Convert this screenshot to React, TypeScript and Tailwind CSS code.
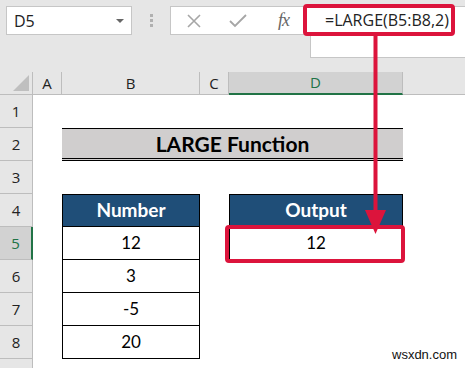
export default function App() {
  const rows = [1, 2, 3, 4, 5, 6, 7, 8, 9]
  const numbers = ['12', '3', '-5', '20']

  return (
    <div className="relative w-[465px] h-[368px] overflow-hidden bg-white font-['Open_Sans',sans-serif]">
      {/* Formula bar */}
      <div className="h-[72px] bg-[#e6e6e6] flex items-start pt-[6px] pl-[6px]">
        <div className="w-[126px] h-[29px] bg-white border border-[#c6c6c6] flex items-center justify-between pl-[7px] pr-[7px]">
          <span className="text-[16px] text-[#222]">D5</span>
          <span className="w-0 h-0 border-l-[4px] border-r-[4px] border-t-[4px] border-l-transparent border-r-transparent border-t-[#666]" />
        </div>
        <div className="w-[38px] h-[29px] flex flex-col items-center justify-center gap-[2px]">
          <span className="w-[3px] h-[3px] bg-[#b0b0b0]" />
          <span className="w-[3px] h-[3px] bg-[#b0b0b0]" />
          <span className="w-[3px] h-[3px] bg-[#b0b0b0]" />
        </div>
        <div className="w-[140px] h-[29px] bg-white border border-[#c6c6c6] border-r-0 flex items-center pl-[14px]">
          <svg width="18" height="18" viewBox="0 0 18 18">
            <path d="M3 3L15 15M15 3L3 15" stroke="#a6a6a6" strokeWidth="1.6" fill="none" />
          </svg>
          <svg width="20" height="18" viewBox="0 0 20 18" className="ml-[25px]">
            <path d="M2 9L7 14L18 3" stroke="#a6a6a6" strokeWidth="1.8" fill="none" />
          </svg>
          <span className="ml-[30px] text-[18px] italic text-[#666] font-['Liberation_Serif',serif] tracking-[-1px]">fx</span>
        </div>
        <div className="flex-1 h-[52px] bg-white border border-[#c6c6c6] border-r-0" />
      </div>

      {/* Sheet grid */}
      <div className="grid grid-cols-[33px_29px_138px_29px_174px_1fr] grid-rows-[23px_repeat(9,33px)] text-[#222]">
        {/* Column headers */}
        <div className="bg-[#e6e6e6] border-r border-b border-[#bdbdbd] relative">
          <svg width="16" height="16" viewBox="0 0 16 16" className="absolute right-[3px] bottom-[3px]">
            <path d="M16 0L16 16L0 16Z" fill="#bfbfbf" />
          </svg>
        </div>
        <div className="bg-[#e6e6e6] border-r border-b border-[#bdbdbd] flex items-center justify-center text-[15px]">A</div>
        <div className="bg-[#e6e6e6] border-r border-b border-[#bdbdbd] flex items-center justify-center text-[15px]">B</div>
        <div className="bg-[#e6e6e6] border-r border-b border-[#bdbdbd] flex items-center justify-center text-[15px]">C</div>
        <div className="bg-[#d2d2d2] border-r border-[#bdbdbd] border-b-2 border-b-[#217346] flex items-center justify-center text-[15px] text-[#217346]">D</div>
        <div className="bg-[#e6e6e6] border-b border-[#bdbdbd]" />

        {rows.map((r) => (
          <div
            key={r}
            style={{ gridRow: r + 1, gridColumn: 1 }}
            className={
              r === 5
                ? 'bg-[#d2d2d2] border-b border-[#bdbdbd] border-r-2 border-r-[#217346] flex items-center justify-center text-[15px] text-[#217346]'
                : 'bg-[#e6e6e6] border-r border-b border-[#bdbdbd] flex items-center justify-center text-[15px]'
            }
          >
            {r < 9 ? r : ''}
          </div>
        ))}

        {/* Title */}
        <div className="row-start-3 col-start-3 col-span-3 bg-[#d0cece] border-t border-black border-b-[3px] border-b-black [border-bottom-style:double] flex items-center justify-center font-['Lato',sans-serif] font-bold text-[21px] text-black">
          LARGE Function
        </div>

        {/* Number table */}
        <div className="row-start-5 col-start-3 bg-[#1f4e78] border border-black flex items-center justify-center font-['Lato',sans-serif] font-bold text-[19px] text-white">
          Number
        </div>
        {numbers.map((n, i) => (
          <div
            key={i}
            style={{ gridRow: i + 6, gridColumn: 3 }}
            className="border border-t-0 border-black flex items-center justify-center font-['Lato',sans-serif] text-[17px] text-black"
          >
            {n}
          </div>
        ))}

        {/* Output table */}
        <div className="row-start-5 col-start-5 bg-[#1f4e78] border border-black flex items-center justify-center font-['Lato',sans-serif] font-bold text-[19px] text-white">
          Output
        </div>
        <div className="row-start-6 col-start-5 border border-t-0 border-black flex items-center justify-center font-['Lato',sans-serif] text-[17px] text-black">
          12
        </div>
      </div>

      {/* Red highlight on formula */}
      <div className="absolute left-[303px] top-[4px] w-[152px] h-[32px] border-[4px] border-[#dc143c] rounded-[4px] flex items-center pl-[18px] bg-white">
        <span className="text-[16px] text-[#222] whitespace-nowrap">=LARGE(B5:B8,2)</span>
      </div>

      {/* Arrow */}
      <svg className="absolute left-0 top-0 pointer-events-none" width="465" height="368">
        <path d="M375.5 36L375.5 214" stroke="#dc143c" strokeWidth="4" fill="none" />
        <path d="M365 210L386 210L375.5 234Z" fill="#dc143c" />
      </svg>

      {/* Red highlight on result */}
      <div className="absolute left-[225px] top-[225px] w-[180px] h-[38px] border-[4px] border-[#dc143c] rounded-[4px]" />

      <div className="absolute left-[392px] top-[345px] text-[13px] text-[#111] font-['Liberation_Sans',sans-serif]">wsxdn.com</div>
    </div>
  )
}
